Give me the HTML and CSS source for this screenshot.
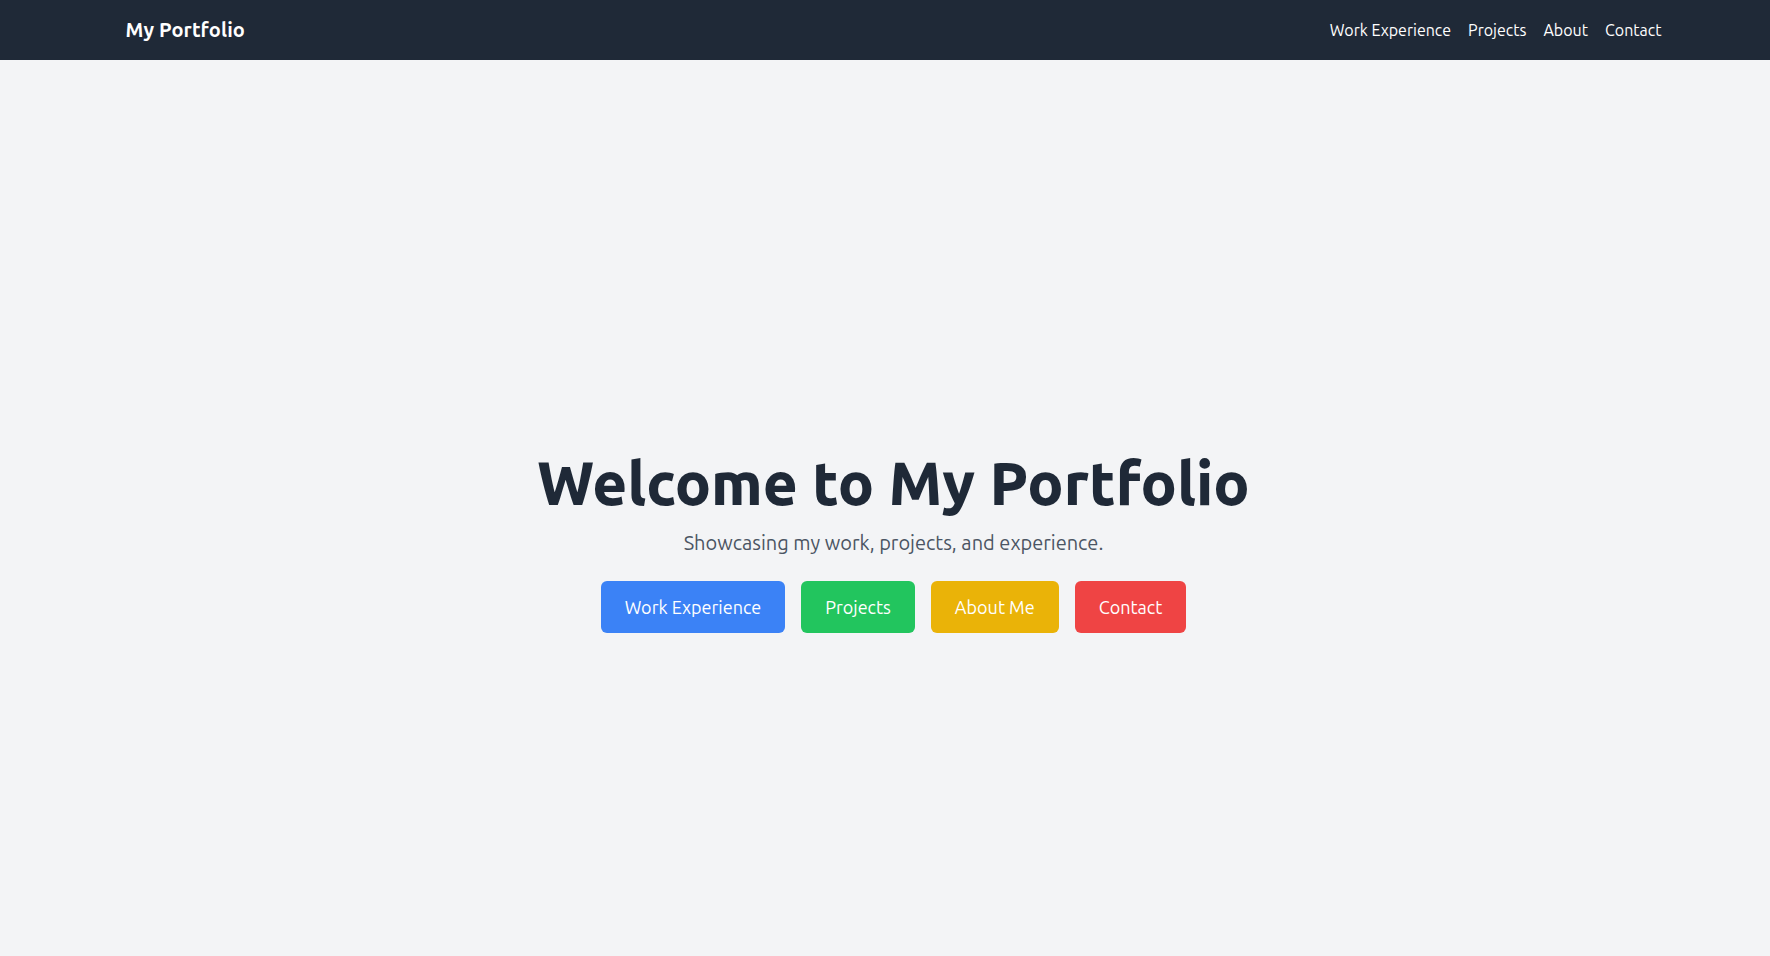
FILE: index.html
```html
<!DOCTYPE html>
<html lang="en">
<head>
<meta charset="utf-8">
<title>My Portfolio</title>
<link rel="stylesheet" href="styles.css">
</head>
<body>
<nav class="nav">
  <div class="nav-inner">
    <a class="brand" href="#">My Portfolio</a>
    <div class="nav-links">
      <a href="#work">Work Experience</a>
      <a href="#projects">Projects</a>
      <a href="#about">About</a>
      <a href="#contact">Contact</a>
    </div>
  </div>
</nav>
<main class="hero">
  <div class="hero-inner">
    <h1 class="title">Welcome to My Portfolio</h1>
    <p class="subtitle">Showcasing my work, projects, and experience.</p>
    <div class="buttons">
      <a class="btn btn-blue" href="#work">Work Experience</a>
      <a class="btn btn-green" href="#projects">Projects</a>
      <a class="btn btn-yellow" href="#about">About Me</a>
      <a class="btn btn-red" href="#contact">Contact</a>
    </div>
  </div>
</main>
</body>
</html>
```
FILE: styles.css
```css
* { box-sizing: border-box; }
html, body { margin: 0; padding: 0; }
body {
  background: #f3f4f6;
  font-family: "Ubuntu", "Noto Sans", "Open Sans", sans-serif;
  color: #1f2937;
  height: 956px;
  overflow: hidden;
}
a { text-decoration: none; color: inherit; }

.nav {
  background: #1f2937;
  height: 60px;
  padding-left: 17px;
}
.nav-inner {
  max-width: 1536px;
  height: 60px;
  margin: 0 auto;
  display: flex;
  align-items: center;
  justify-content: space-between;
}
.brand {
  color: #ffffff;
  font-size: 20px;
  line-height: 28px;
  font-weight: 700;
  letter-spacing: 0.1px;
}
.nav-links {
  display: flex;
  gap: 17px;
}
.nav-links a {
  color: #ffffff;
  font-size: 16px;
  line-height: 24px;
}

.hero {
  height: 896px;
  padding-top: 70px;
  padding-left: 17px;
  display: flex;
  align-items: center;
  justify-content: center;
}
.hero-inner {
  text-align: center;
}
.title {
  margin: 0 0 16px;
  font-size: 60px;
  line-height: 1;
  font-weight: 800;
  color: #1f2937;
}
.subtitle {
  margin: 0 0 24px;
  font-size: 20px;
  line-height: 28px;
  color: #4b5563;
}
.buttons {
  display: flex;
  justify-content: center;
  gap: 16px;
}
.btn {
  display: inline-block;
  padding: 12px 24px;
  font-size: 18px;
  line-height: 28px;
  color: #ffffff;
  border-radius: 6px;
}
.btn-blue { background: #3b82f6; }
.btn-green { background: #22c55e; }
.btn-yellow { background: #eab308; }
.btn-red { background: #ef4444; }
```
